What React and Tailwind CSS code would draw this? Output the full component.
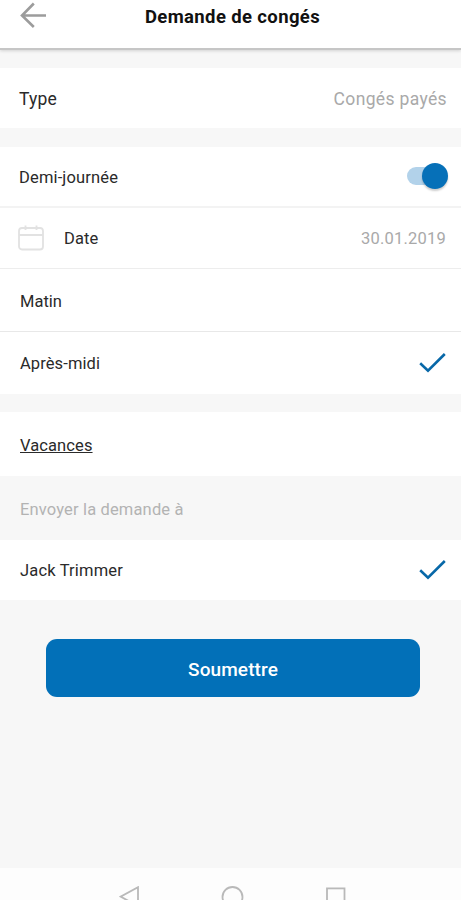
import { useState } from "react";

function CheckIcon() {
  return (
    <svg
      width="28"
      height="22"
      viewBox="0 0 28 22"
      fill="none"
      stroke="#0868a8"
      strokeWidth="2.6"
    >
      <path d="M1.2 11.2 L9 18.6 L25.8 2" />
    </svg>
  );
}

function CalendarIcon() {
  return (
    <svg
      width="26"
      height="26"
      viewBox="0 0 26 26"
      fill="none"
      stroke="#e2e2e2"
      strokeWidth="1.8"
    >
      <rect x="1" y="3" width="24" height="21.5" rx="3" />
      <path d="M1 10 H25 M7.5 0.5 V5 M18.5 0.5 V5" />
    </svg>
  );
}

function Toggle({ checked, onChange }) {
  return (
    <button
      type="button"
      role="switch"
      aria-checked={checked}
      onClick={onChange}
      className={`flex items-center w-[38px] h-[18px] -mt-px rounded-full bg-[#b2d2ea] ${
        checked ? "justify-end" : "justify-start"
      }`}
    >
      <span className="w-[26px] h-[26px] shrink-0 -mr-[3px] rounded-full bg-[#0670b8] shadow-[0_2px_2px_rgba(0,0,0,0.2)]" />
    </button>
  );
}

function Header() {
  return (
    <header className="relative z-10 flex items-start h-[50px] bg-white border-b-2 border-[#c6c6c6] shadow-[0_1px_3px_rgba(0,0,0,0.15)]">
      <div className="w-[66px] pl-5 pt-[2px]">
        <svg
          width="27"
          height="26"
          viewBox="0 0 27 26"
          fill="none"
          stroke="#9c9c9c"
          strokeWidth="2.6"
        >
          <path d="M13.8 1.5 L2 13.5 L13.8 25 M2 13.5 H26" />
        </svg>
      </div>
      <h1 className="flex-1 pr-[62px] text-center text-[18.5px] leading-[34px] font-bold tracking-[0.37px] whitespace-nowrap text-[#111]">
        Demande de congés
      </h1>
    </header>
  );
}

function NavBar() {
  return (
    <nav className="h-8 pl-[119px] pt-[18px] overflow-hidden bg-[#fdfdfd]">
      <svg
        width="228"
        height="24"
        viewBox="0 0 228 24"
        fill="none"
        stroke="#b9b9b9"
        strokeWidth="1.8"
      >
        <path d="M19 1.2 V20 L1.5 10.6 Z" />
        <circle cx="113.5" cy="11" r="10" />
        <rect x="208" y="2.4" width="17.5" height="17.5" />
      </svg>
    </nav>
  );
}

function App() {
  const [halfDay, setHalfDay] = useState(true);
  const [period, setPeriod] = useState("afternoon");

  return (
    <div className="flex flex-col h-[900px] overflow-hidden bg-[#f7f7f7] font-[Roboto,sans-serif] text-[17.5px] text-[#2a2a2a]">
      <Header />

      <div className="mt-[18px] flex items-center justify-between h-[60px] pl-[19px] pr-[14px] pt-[2px] bg-white">
        <span className="tracking-[0.2px]">Type</span>
        <span className="tracking-[0.35px] text-[#a9a9a9]">Congés payés</span>
      </div>

      <section className="mt-[19px] bg-white">
        <div className="flex items-center justify-between h-[61px] pl-[19px] pr-4 border-b-2 border-[#f3f3f3]">
          <span className="pt-1 text-[16.5px] tracking-[0.15px]">
            Demi-journée
          </span>
          <Toggle checked={halfDay} onChange={() => setHalfDay(!halfDay)} />
        </div>
        <div className="flex items-center h-[61px] pl-[18px] pr-[15px] border-b border-[#ededed]">
          <CalendarIcon />
          <span className="ml-5 flex-1 pt-[2px] text-[16.5px] tracking-[0.1px]">
            Date
          </span>
          <span className="pt-[2px] text-[16.5px] tracking-[0.2px] text-[#a9a9a9]">
            30.01.2019
          </span>
        </div>
        <div
          className="flex items-center justify-between h-[63px] pl-5 pr-[14px] border-b border-[#e8e8e8]"
          onClick={() => setPeriod("morning")}
        >
          <span className="pt-[5px] text-[16.5px]">Matin</span>
          {period === "morning" && <CheckIcon />}
        </div>
        <div
          className="flex items-center justify-between h-[62px] pl-5 pr-[14px]"
          onClick={() => setPeriod("afternoon")}
        >
          <span className="pt-[3px] text-[16.5px] tracking-[0.1px]">
            Après-midi
          </span>
          {period === "afternoon" && <CheckIcon />}
        </div>
      </section>

      <div className="mt-[18px] flex items-center h-16 pl-5 pt-[5px] bg-white">
        <span className="text-[16.5px] tracking-[0.1px] underline underline-offset-1">
          Vacances
        </span>
      </div>

      <div className="flex items-center h-16 pl-5 pt-1 text-[16.5px] tracking-[0.15px] text-[#b3b3b3]">
        Envoyer la demande à
      </div>

      <div className="flex items-center justify-between h-[60px] pl-5 pr-[14px] bg-white">
        <span className="pt-[3px] text-[16.5px] tracking-[0.17px]">
          Jack Trimmer
        </span>
        <CheckIcon />
      </div>

      <button
        type="button"
        className="mt-[39px] ml-[46px] w-[374px] h-[58px] pt-1 rounded-[11px] bg-[#0270b8] text-[19px] font-medium tracking-[0.1px] text-white"
      >
        Soumettre
      </button>

      <div className="flex-1" />
      <NavBar />
    </div>
  );
}

export default App;
